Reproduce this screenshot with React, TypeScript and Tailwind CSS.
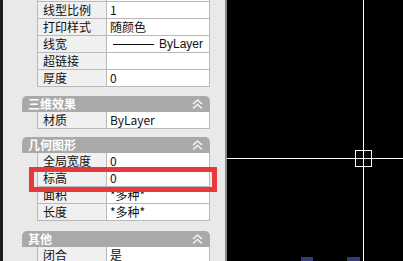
import React from 'react';

type Row = { label: string; value: React.ReactNode };

const font = { fontFamily: '"Noto Sans CJK SC", "Liberation Sans", sans-serif' };

function PropRow({ label, value }: Row) {
  return (
    <div className="flex h-[17px] border-x border-b border-[#b9b9b9] text-[12px] leading-[16px] text-[#111]">
      <div className="w-[69px] shrink-0 border-r border-[#b9b9b9] bg-[#f0f0f0] pl-[5px]">{label}</div>
      <div className="flex flex-1 items-center bg-white pl-[3px]">{value}</div>
    </div>
  );
}

function Chevrons() {
  return (
    <svg width="11" height="12" viewBox="0 0 11 12" fill="none" stroke="#f4f4f4" strokeWidth="1.6">
      <polyline points="1,6 5.5,2 10,6" />
      <polyline points="1,10.5 5.5,6.5 10,10.5" />
    </svg>
  );
}

function Section({ title, rows, className }: { title: string; rows: Row[]; className: string }) {
  return (
    <div className={className}>
      <div className="ml-[19px] flex h-[16px] w-[188px] items-center justify-between rounded-t-[5px] bg-[#a9a9a9] pl-[6px] pr-[7px]">
        <span className="text-[12px] font-bold leading-none text-white">{title}</span>
        <Chevrons />
      </div>
      <div className="ml-[34px] w-[173px]">
        {rows.map((r) => (
          <PropRow key={r.label} {...r} />
        ))}
      </div>
    </div>
  );
}

export default function App() {
  const general: Row[] = [
    { label: '', value: '' },
    { label: '线型比例', value: '1' },
    { label: '打印样式', value: '随颜色' },
    {
      label: '线宽',
      value: (
        <span className="flex items-center">
          <span className="ml-[3px] h-px w-[41px] bg-[#111]" />
          <span className="ml-[5px]" style={{ fontFamily: '"Liberation Sans", sans-serif' }}>ByLayer</span>
        </span>
      ),
    },
    { label: '超链接', value: '' },
    { label: '厚度', value: '0' },
  ];

  return (
    <div className="flex h-[261px] w-[403px] overflow-hidden bg-black" style={font}>
      <div className="w-[3px] shrink-0 bg-[#1c1c1c]" />
      <div className="relative w-[222px] shrink-0 overflow-hidden bg-[#e9e9e9]">
        <div className="-mt-[15px] ml-[34px] w-[173px]">
          {general.map((r, i) => (
            <PropRow key={i} {...r} />
          ))}
        </div>
        <Section className="mt-[9px]" title="三维效果" rows={[{ label: '材质', value: 'ByLayer' }]} />
        <Section
          className="mt-[8px]"
          title="几何图形"
          rows={[
            { label: '全局宽度', value: '0' },
            { label: '标高', value: '0' },
            { label: '面积', value: '*多种*' },
            { label: '长度', value: '*多种*' },
          ]}
        />
        <Section className="mt-[10px]" title="其他" rows={[{ label: '闭合', value: '是' }]} />

        {/* highlight box */}
        <div className="absolute left-[26px] top-[167px] h-[25px] w-[188px] border-[5px] border-[#e5393a]" />
      </div>
      <div className="w-[2px] shrink-0 bg-[#8c8c8c]" />
      <div className="relative flex-1 bg-black">
        <div className="absolute left-[136px] top-0 h-full w-px bg-white" />
        <div className="absolute left-0 top-[158px] h-px w-full bg-white" />
        <div className="absolute left-[128px] top-[150px] h-[17px] w-[17px] border border-white" />
        <div className="absolute left-[74px] top-[257px] h-[4px] w-[12px] bg-[#363a78]" />
        <div className="absolute left-[120px] top-[257px] h-[4px] w-[13px] bg-[#363a78]" />
      </div>
    </div>
  );
}
